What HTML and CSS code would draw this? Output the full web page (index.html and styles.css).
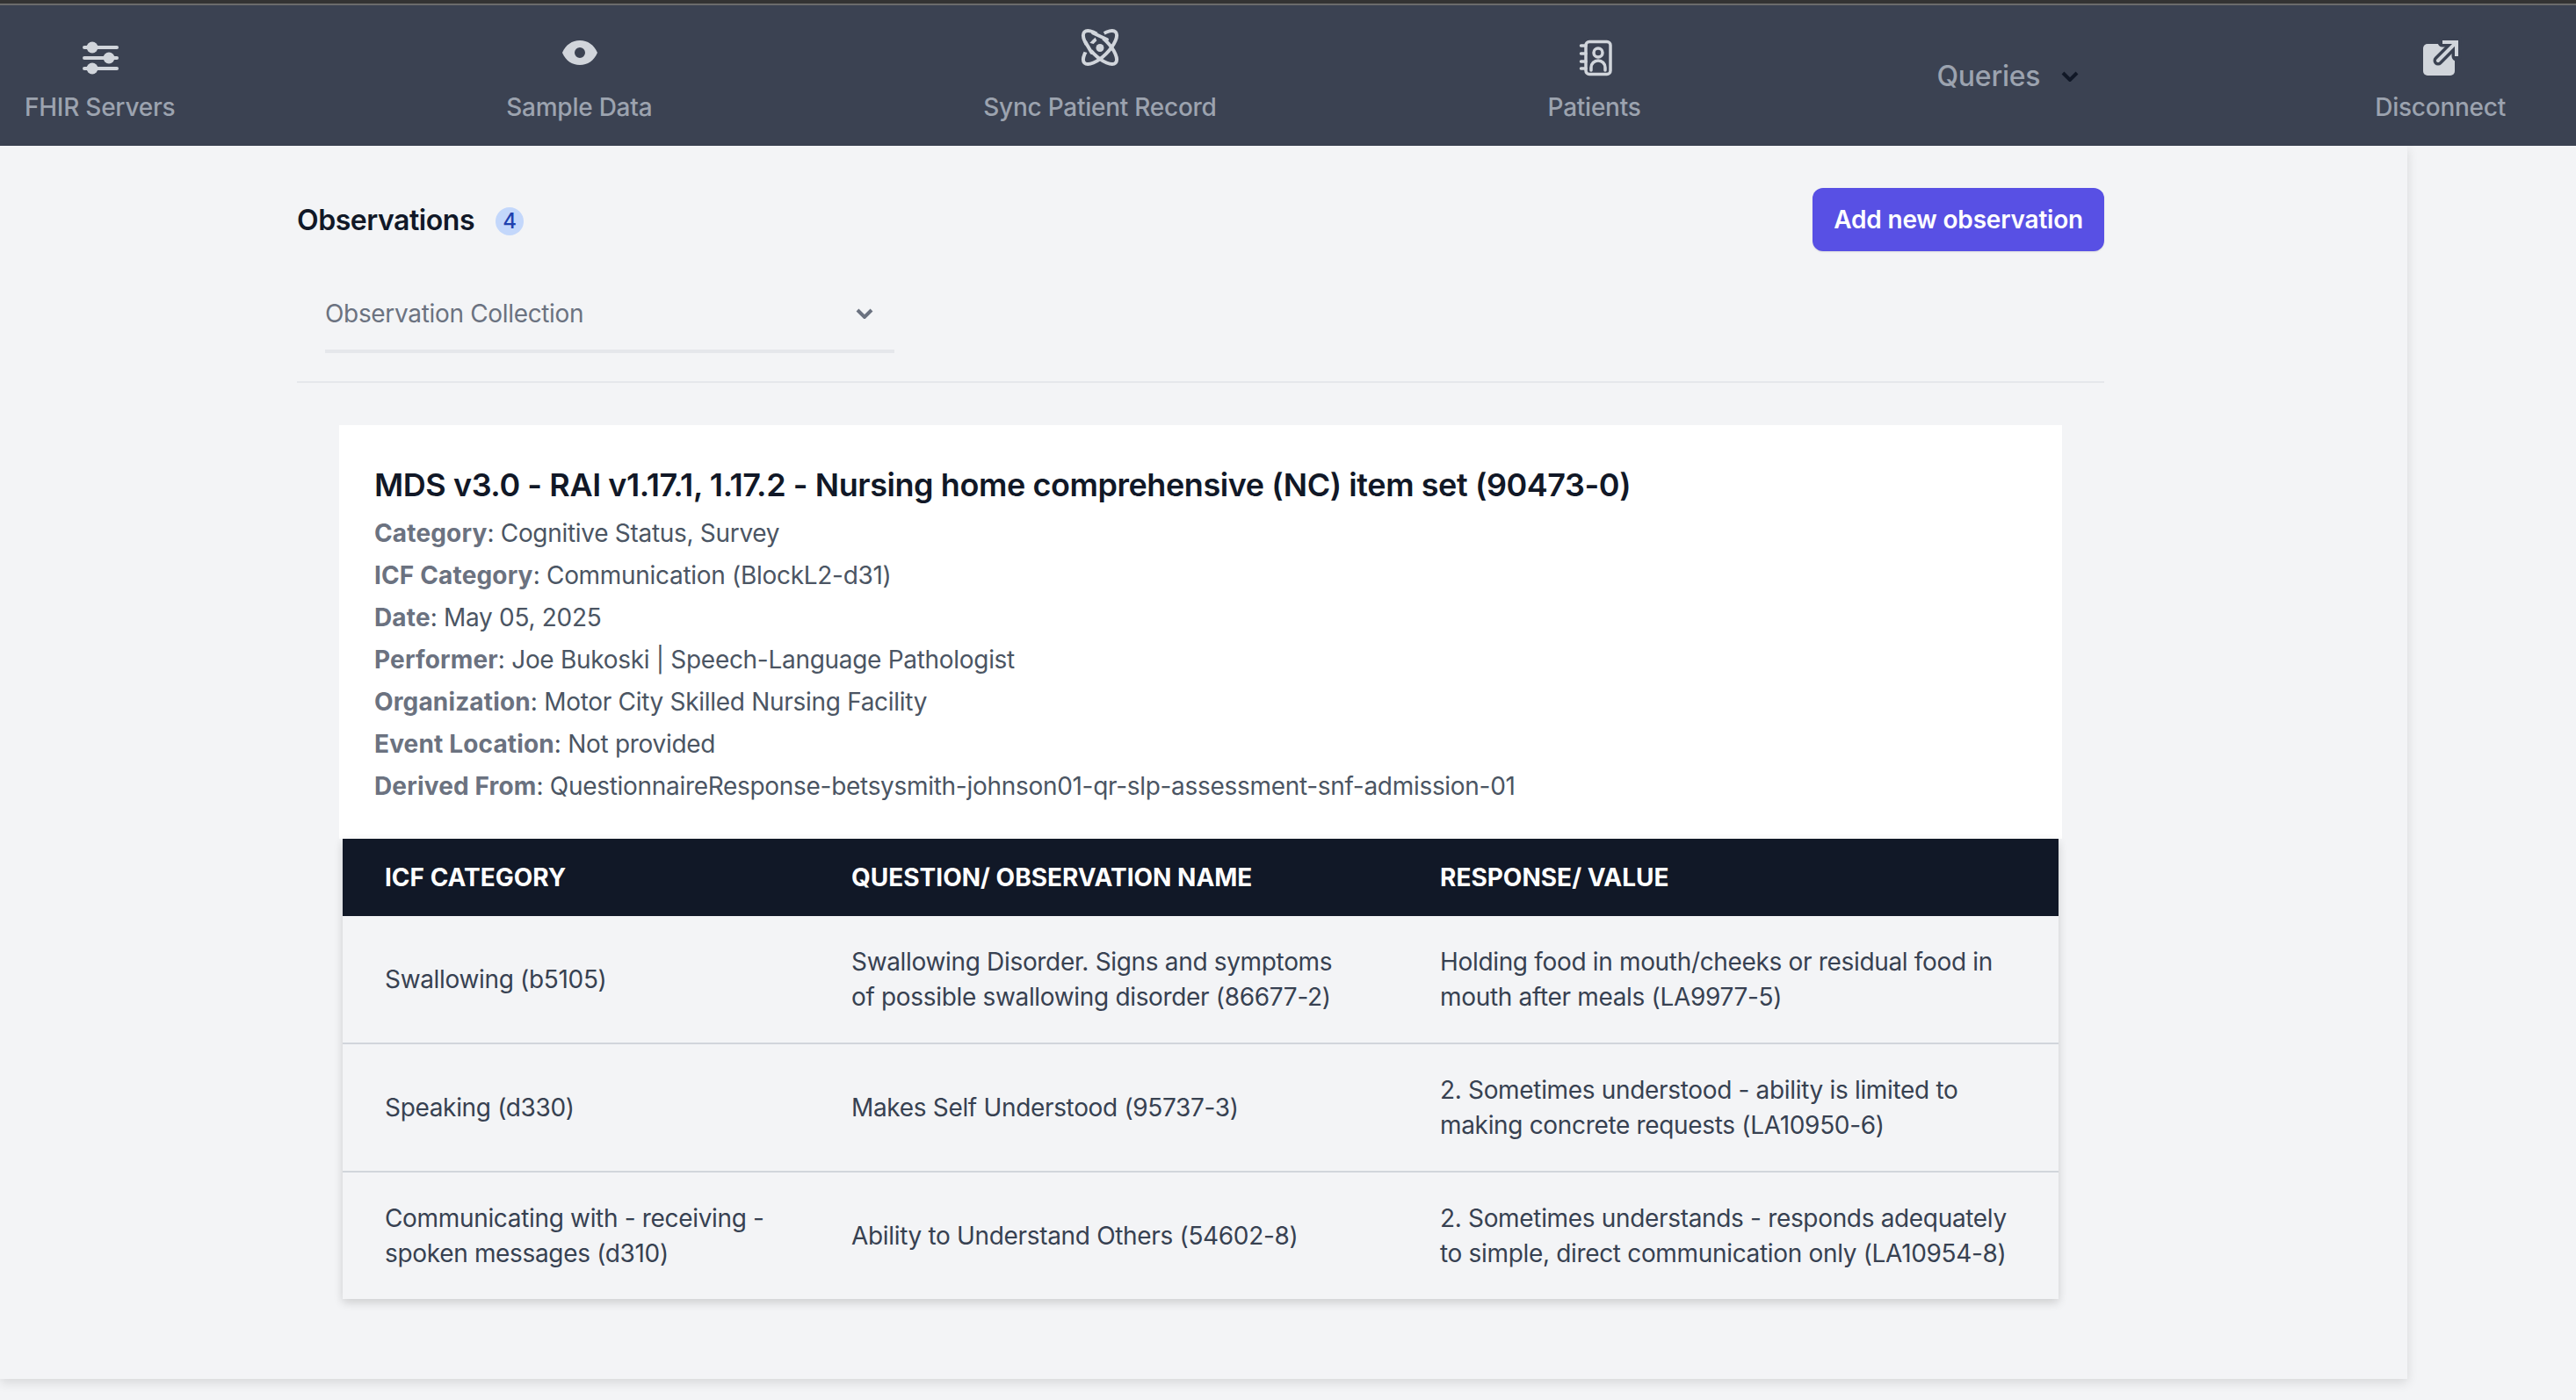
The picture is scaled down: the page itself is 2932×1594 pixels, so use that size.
FILE: index.html
```html
<!DOCTYPE html>
<html lang="en">
<head>
    <meta charset="UTF-8">
    <title>Observations</title>
    <link rel="stylesheet" href="styles.css">
</head>
<body>
    <div class="topline"></div>
    <nav class="nav">
        <a class="nav-item">
            <svg class="nav-icon" viewBox="0 0 60 60">
                <path class="line" d="M12 24H49M12 36H49M12 48H49"/>
                <circle class="solid" cx="21" cy="24" r="6.5"/>
                <circle class="solid" cx="40" cy="36" r="6.5"/>
                <circle class="solid" cx="21" cy="48" r="6.5"/>
            </svg>
            <span>FHIR Servers</span>
        </a>
        <a class="nav-item">
            <svg class="nav-icon" viewBox="0 0 60 60">
                <path class="solid" fill-rule="evenodd" d="M11 30C15 21 22 16 31 16S47 21 51 30C47 39 40 44 31 44S15 39 11 30ZM31 24A6 6 0 1 0 31 36A6 6 0 1 0 31 24Z"/>
            </svg>
            <span>Sample Data</span>
        </a>
        <a class="nav-item">
            <svg class="nav-icon" viewBox="0 0 60 60">
                <ellipse class="line" cx="30" cy="24" rx="10" ry="25" transform="rotate(-45 30 24)"/>
                <ellipse class="line" cx="30" cy="24" rx="10" ry="25" transform="rotate(45 30 24)"/>
                <path class="cut" d="M25 13.5L35 8.5M15.5 30L19 19"/>
                <path class="line" d="M22 7.5L38 15M13.5 18L20.5 30"/>
                <circle class="solid" cx="30" cy="24.5" r="4.5"/>
            </svg>
            <span>Sync Patient Record</span>
        </a>
        <a class="nav-item">
            <svg class="nav-icon" viewBox="0 0 60 60">
                <rect class="thin" x="20" y="17.5" width="28" height="37" rx="4"/>
                <path class="thin" d="M14.5 22H20M14.5 31H20M14.5 40H20M14.5 48H20"/>
                <circle class="thin" cx="34" cy="30" r="5"/>
                <path class="thin" d="M26 50V47A8 8 0 0 1 42 47V50"/>
            </svg>
            <span>Patients</span>
        </a>
        <a class="nav-menu">
            <span>Queries</span>
            <svg class="menu-chevron" viewBox="0 0 20 12"><path d="M2 2L10 10L18 2"/></svg>
        </a>
        <a class="nav-item">
            <svg class="nav-icon" viewBox="0 0 60 60">
                <rect class="solid" x="10" y="20" width="36" height="36" rx="5"/>
                <path class="cut-wide" d="M27 39L48 18"/>
                <path class="cut-wide" d="M32 18H48V34"/>
                <path class="line" d="M27 39L47 19"/>
                <path class="head" d="M32 18H48V34"/>
            </svg>
            <span>Disconnect</span>
        </a>
    </nav>

    <main class="main">
        <div class="page-head">
            <div class="page-title">
                <h1>Observations</h1>
                <span class="badge">4</span>
            </div>
            <button class="btn-add">Add new observation</button>
        </div>

        <div class="select">
            <span>Observation Collection</span>
            <svg class="select-chevron" viewBox="0 0 20 12"><path d="M2 2L10 10L18 2"/></svg>
        </div>
        <hr class="divider">

        <section class="card">
            <div class="card-head">
                <h2>MDS v3.0 - RAI v1.17.1, 1.17.2 - Nursing home comprehensive (NC) item set (90473-0)</h2>
                <p><b>Category</b>: Cognitive Status, Survey</p>
                <p><b>ICF Category</b>: Communication (BlockL2-d31)</p>
                <p><b>Date</b>: May 05, 2025</p>
                <p><b>Performer</b>: Joe Bukoski | Speech-Language Pathologist</p>
                <p><b>Organization</b>: Motor City Skilled Nursing Facility</p>
                <p><b>Event Location</b>: Not provided</p>
                <p><b>Derived From</b>: QuestionnaireResponse-betsysmith-johnson01-qr-slp-assessment-snf-admission-01</p>
            </div>
            <table class="obs-table">
                <colgroup>
                    <col class="col-cat">
                    <col class="col-name">
                    <col class="col-value">
                </colgroup>
                <thead>
                    <tr>
                        <th>ICF Category</th>
                        <th>Question/ Observation Name</th>
                        <th>Response/ Value</th>
                    </tr>
                </thead>
                <tbody>
                    <tr>
                        <td>Swallowing (b5105)</td>
                        <td>Swallowing Disorder. Signs and symptoms<br>of possible swallowing disorder (86677-2)</td>
                        <td>Holding food in mouth/cheeks or residual food in<br>mouth after meals (LA9977-5)</td>
                    </tr>
                    <tr>
                        <td>Speaking (d330)</td>
                        <td>Makes Self Understood (95737-3)</td>
                        <td>2. Sometimes understood - ability is limited to<br>making concrete requests (LA10950-6)</td>
                    </tr>
                    <tr>
                        <td>Communicating with - receiving -<br>spoken messages (d310)</td>
                        <td>Ability to Understand Others (54602-8)</td>
                        <td>2. Sometimes understands - responds adequately<br>to simple, direct communication only (LA10954-8)</td>
                    </tr>
                </tbody>
            </table>
        </section>
    </main>
</body>
</html>
```

FILE: styles.css
```css
html,body{
    margin: 0;
    padding: 0;
    height: 1594px;
    overflow: hidden;
}
body{
    background-color: #f3f4f6;
    font-family: Inter, "Liberation Sans", sans-serif;
    font-size: 28px;
    line-height: 40px;
    letter-spacing: -0.33px;
    color: #374151;
}
.topline{
    height: 6px;
    box-sizing: border-box;
    background-color: #333333;
    border-bottom: 2px solid #6b6b6b;
}

/* top nav */
.nav{
    height: 160px;
    padding: 0 80px 0 28px;
    display: flex;
    align-items: center;
    justify-content: space-between;
    background-color: #3b4252;
    color: #9ca3af;
    font-weight: 500;
    letter-spacing: -0.25px;
}
.nav-item{
    display: flex;
    flex-direction: column;
    align-items: center;
    gap: 12px;
}
.nav-icon{
    display: block;
    width: 60px;
    height: 60px;
}
.nav-icon .line{
    fill: none;
    stroke: #d1d5db;
    stroke-width: 4;
    stroke-linecap: round;
}
.nav-icon .thin{
    fill: none;
    stroke: #d1d5db;
    stroke-width: 3.5;
    stroke-linecap: round;
}
.nav-icon .solid{
    fill: #d1d5db;
}
.nav-icon .cut{
    fill: none;
    stroke: #3b4252;
    stroke-width: 9;
}
.nav-icon .cut-wide{
    fill: none;
    stroke: #3b4252;
    stroke-width: 11;
    stroke-linecap: round;
}
.nav-icon .head{
    fill: none;
    stroke: #d1d5db;
    stroke-width: 4;
}
.nav-menu{
    display: flex;
    align-items: center;
    gap: 24px;
    margin: 2px -40px 0;
    font-size: 32px;
}
.menu-chevron{
    width: 20px;
    height: 12px;
}
.menu-chevron path,
.select-chevron path{
    fill: none;
    stroke: #111827;
    stroke-width: 4;
}
.select-chevron path{
    stroke: #6b7280;
}

/* main panel */
.main{
    width: 2740px;
    height: 1404px;
    box-sizing: border-box;
    padding: 48px 345px 0 338px;
    background-color: #f3f4f6;
    box-shadow: 0 4px 12px rgba(0,0,0,0.12);
}
.page-head{
    display: flex;
    align-items: center;
    justify-content: space-between;
}
.page-title{
    display: flex;
    align-items: center;
    gap: 24px;
    margin-top: 2px;
}
.page-title h1{
    margin: 0;
    font-size: 32px;
    line-height: 40px;
    font-weight: 600;
    letter-spacing: -0.45px;
    color: #111827;
}
.badge{
    width: 32px;
    height: 32px;
    margin-top: 2px;
    border-radius: 50%;
    background-color: #c3d7fb;
    color: #1e40af;
    font-size: 24px;
    line-height: 32px;
    font-weight: 500;
    text-align: center;
}
.btn-add{
    height: 72px;
    padding: 0 24px;
    border: none;
    border-radius: 12px;
    background-color: #5850e4;
    color: #ffffff;
    font-family: inherit;
    font-size: 28px;
    font-weight: 600;
    letter-spacing: -0.2px;
    box-shadow: 0 1px 2px rgba(0,0,0,0.1);
}
.select{
    width: 648px;
    height: 92px;
    margin: 24px 0 0 32px;
    box-sizing: border-box;
    padding: 6px 24px 0 0;
    display: flex;
    align-items: center;
    justify-content: space-between;
    border-bottom: 4px solid #e5e7eb;
    color: #6b7280;
}
.select-chevron{
    width: 20px;
    height: 12px;
}
.divider{
    margin: 32px 0 0;
    height: 2px;
    border: none;
    background-color: #e5e7eb;
}

/* observation card */
.card{
    margin: 48px 48px 0;
}
.card-head{
    padding: 40px 40px 36px;
    background-color: #ffffff;
    color: #4b5563;
}
.card-head h2{
    margin: 0 0 3px;
    font-size: 36px;
    line-height: 56px;
    font-weight: 600;
    letter-spacing: -0.43px;
    color: #111827;
}
.card-head p{
    margin: 0;
    line-height: 48px;
    letter-spacing: -0.3px;
}
.card-head b{
    font-weight: 700;
    letter-spacing: 0.15px;
    color: #6b7280;
}
.obs-table{
    width: 1953px;
    margin: 0 4px;
    border-collapse: collapse;
    table-layout: fixed;
    box-shadow: 0 4px 10px rgba(0,0,0,0.16);
}
.col-cat{
    width: 531px;
}
.col-name{
    width: 670px;
}
.obs-table th{
    height: 88px;
    padding: 0 48px;
    background-color: #111827;
    color: #ffffff;
    text-align: left;
    font-weight: 700;
    text-transform: uppercase;
    letter-spacing: 0;
}
.obs-table td{
    height: 144px;
    padding: 0 48px;
    border-bottom: 2px solid #d1d5db;
    white-space: nowrap;
}
.obs-table tr:last-child td{
    border-bottom: none;
}
```
